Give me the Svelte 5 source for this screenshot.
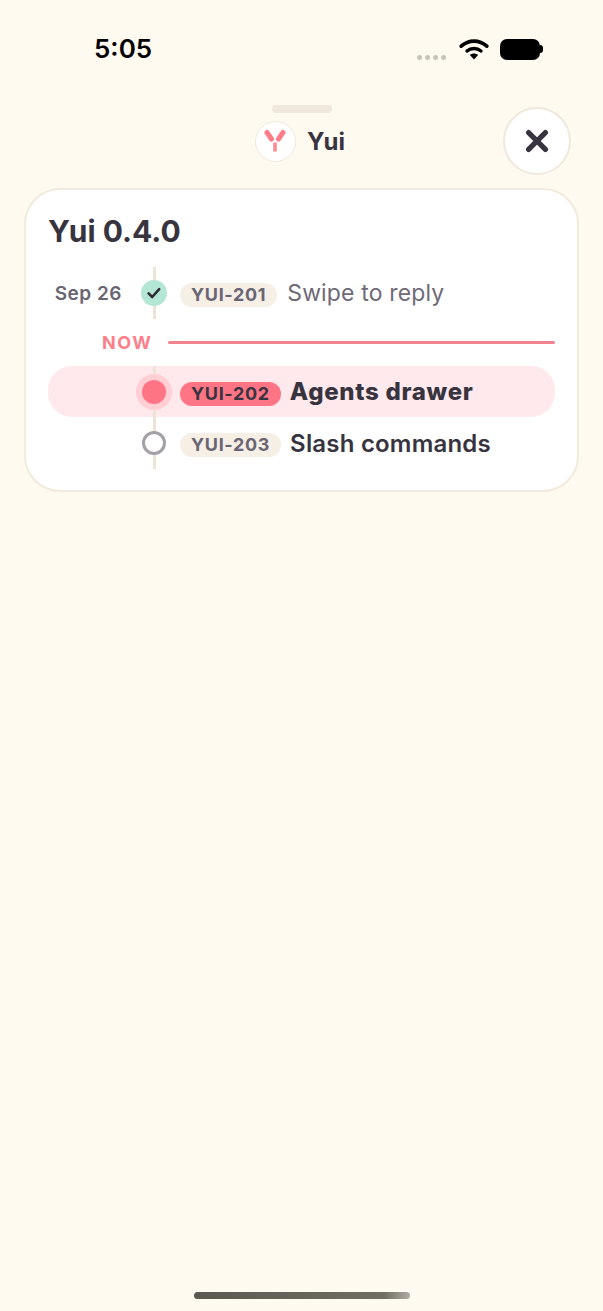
<script>
  let rows = [
    { date: "Sep 26", key: "YUI-201", title: "Swipe to reply", state: "done" },
    { key: "YUI-202", title: "Agents drawer", state: "current" },
    { key: "YUI-203", title: "Slash commands", state: "todo" }
  ];
</script>

<div class="screen">
  <div class="status">
    <span class="time">5:05</span>
    <div class="status-icons">
      <div class="dots"><i></i><i></i><i></i><i></i></div>
      <svg class="wifi" width="30" height="22" viewBox="0 0 30 22" fill="none">
        <path d="M2.2 8.2C9.6 1.4 20.4 1.4 27.8 8.2" stroke="#000" stroke-width="3.6" stroke-linecap="round"/>
        <path d="M8 13C12 9.6 18 9.6 22 13" stroke="#000" stroke-width="3.4" stroke-linecap="round"/>
        <path d="M15 21.4L10.9 17C13.3 15 16.7 15 19.1 17Z" fill="#000"/>
      </svg>
      <div class="battery"></div>
      <div class="battery-cap"></div>
    </div>
  </div>

  <div class="handle"></div>

  <div class="header">
    <div class="title-wrap">
      <div class="logo">
        <svg width="26" height="26" viewBox="0 0 26 26">
          <path d="M5 4.5L9.5 11" stroke="#ff7d88" stroke-width="5" stroke-linecap="round"/>
          <path d="M21 4.5L16.5 11" stroke="#ff7d88" stroke-width="5" stroke-linecap="round"/>
          <rect x="11.2" y="14.5" width="3.6" height="9" fill="#ff8a94"/>
        </svg>
      </div>
      <span class="name">Yui</span>
    </div>
    <button class="close" aria-label="Close">
      <svg width="24" height="24" viewBox="0 0 24 24">
        <path d="M3.6 3.6L20.4 20.4M20.4 3.6L3.6 20.4" stroke="#38343f" stroke-width="5.2" stroke-linecap="round"/>
      </svg>
    </button>
  </div>

  <div class="card">
    <h1>Yui 0.4.0</h1>
    <div class="timeline">
      {#each rows as row, i}
        {#if i === 1}
          <div class="now">
            <span>NOW</span>
            <div class="now-line"></div>
          </div>
        {/if}
        <div class="row {row.state}">
          <div class="date">{row.date ?? ""}</div>
          <div class="node">
            <div class="rail"></div>
            {#if row.state === "done"}
              <div class="dot dot-done">
                <svg width="16" height="16" viewBox="0 0 16 16" fill="none">
                  <path d="M2.6 8.4L6.2 12L13.2 4.2" stroke="#2f2b35" stroke-width="2.6" stroke-linecap="round" stroke-linejoin="round"/>
                </svg>
              </div>
            {:else if row.state === "current"}
              <div class="dot dot-current"></div>
            {:else}
              <div class="dot dot-todo"></div>
            {/if}
          </div>
          <span class="pill">{row.key}</span>
          <span class="label">{row.title}</span>
        </div>
      {/each}
    </div>
  </div>

  <div class="home"></div>
</div>

<style>
  :global(body) {
    margin: 0;
    background: #fffaf0;
  }

  .screen {
    position: relative;
    height: 1311px;
    overflow: hidden;
    background: #fffaf0;
    font-family: Inter, "Liberation Sans", sans-serif;
    color: #38343f;
  }

  .status {
    display: flex;
    justify-content: space-between;
    align-items: center;
    height: 32px;
    padding: 33px 60px 0 94px;
  }

  .time {
    font-size: 26px;
    font-weight: 600;
    line-height: 32px;
    color: #000;
  }

  .status-icons {
    display: flex;
    align-items: center;
  }

  .dots {
    display: flex;
    gap: 3px;
    margin: 16px 13px 0 0;
  }

  .dots i {
    width: 5px;
    height: 5px;
    border-radius: 50%;
    background: #c6c3ba;
  }

  .wifi {
    margin-right: 11px;
  }

  .battery {
    width: 40px;
    height: 21px;
    border-radius: 7px;
    background: #000;
  }

  .battery-cap {
    width: 3px;
    height: 8px;
    border-radius: 0 4px 4px 0;
    background: #000;
  }

  .handle {
    width: 60px;
    height: 8px;
    margin: 40px auto 0;
    border-radius: 4px;
    background: #f0e8dc;
  }

  .header {
    position: relative;
    display: flex;
    justify-content: center;
    height: 40px;
    margin-top: 8px;
  }

  .title-wrap {
    display: flex;
    align-items: center;
    gap: 11px;
    padding-right: 3px;
  }

  .logo {
    box-sizing: border-box;
    display: flex;
    align-items: center;
    justify-content: center;
    width: 41px;
    height: 41px;
    border: 1.5px solid #f0e8dc;
    border-radius: 50%;
    background: #fff;
  }

  .name {
    font-size: 24px;
    font-weight: 700;
  }

  .close {
    position: absolute;
    top: -14px;
    right: 32px;
    box-sizing: border-box;
    display: flex;
    align-items: center;
    justify-content: center;
    width: 68px;
    height: 68px;
    padding: 0;
    border: 2px solid #f0e8dc;
    border-radius: 50%;
    background: #fff;
  }

  .card {
    box-sizing: border-box;
    height: 304px;
    margin: 27px 24px 0;
    padding: 23px 22px 0;
    border: 2px solid #f2eadd;
    border-radius: 36px;
    background: #fff;
  }

  h1 {
    margin: 0;
    font-size: 30px;
    line-height: 36px;
    font-weight: 700;
  }

  .timeline {
    margin-top: 18px;
  }

  .row {
    display: flex;
    align-items: center;
    height: 52px;
  }

  .row.current {
    height: 51px;
    border-radius: 24px;
    background: #ffe9ec;
  }

  .date {
    box-sizing: border-box;
    width: 90px;
    padding-right: 16px;
    text-align: right;
    font-size: 19px;
    font-weight: 600;
    letter-spacing: 0.5px;
    color: #6a6573;
    white-space: nowrap;
  }

  .node {
    position: relative;
    display: flex;
    align-items: center;
    justify-content: center;
    width: 32px;
    height: 100%;
    margin-right: 10px;
  }

  .rail {
    position: absolute;
    top: 0;
    bottom: 0;
    left: 15px;
    width: 3px;
    background: #ece5d6;
  }

  .dot {
    position: relative;
    box-sizing: border-box;
    display: flex;
    align-items: center;
    justify-content: center;
    width: 26px;
    height: 26px;
    border-radius: 50%;
  }

  .dot-done {
    background: #b3e6d4;
  }

  .dot-current {
    width: 24px;
    height: 24px;
    background: #ff7585;
    box-shadow: 0 0 0 6px #ffcfd4;
  }

  .dot-todo {
    width: 24px;
    height: 24px;
    border: 3px solid #a3a0a8;
    background: #fff;
  }

  .pill {
    margin: 4px 9px 0 0;
    padding: 1px 11px;
    border-radius: 12px;
    background: #f6efe6;
    font-size: 18px;
    line-height: 22px;
    font-weight: 700;
    letter-spacing: 0.65px;
    color: #6a6573;
  }

  .current .pill {
    background: #ff7585;
    color: #38343f;
  }

  .label {
    font-size: 24px;
    font-weight: 600;
    letter-spacing: 0.2px;
    color: #38343f;
    white-space: nowrap;
  }

  .done .label {
    font-size: 23px;
    font-weight: 400;
    letter-spacing: 0.15px;
    color: #6f6a77;
  }

  .done .pill {
    margin-right: 10px;
  }

  .current .label {
    font-weight: 800;
    letter-spacing: 0.7px;
  }

  .now {
    display: flex;
    align-items: center;
    gap: 15px;
    height: 47px;
    padding-left: 54px;
  }

  .now span {
    font-size: 18px;
    font-weight: 700;
    letter-spacing: 1.6px;
    color: #fb7f8a;
  }

  .now-line {
    flex: 1;
    height: 3px;
    border-radius: 2px;
    background: #f2848d;
  }

  .home {
    position: absolute;
    left: 194px;
    bottom: 12px;
    width: 216px;
    height: 7px;
    border-radius: 4px;
    background: linear-gradient(90deg, #5a5850, #6f6d64 88%, #b0aea4);
  }
</style>
